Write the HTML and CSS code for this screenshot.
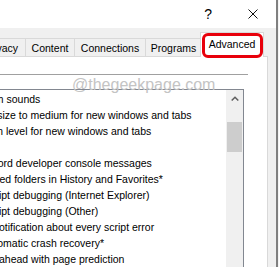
FILE: index.html
```html
<!DOCTYPE html>
<html lang="en">
<head>
    <meta charset="UTF-8">
    <meta name="viewport" content="width=device-width, initial-scale=1.0">
    <title>Internet Options - Advanced</title>
    <link rel="stylesheet" href="styles.css">
</head>
<body>

<div class="screen">
    <div class="dialog">
        <div class="titlebar">
            <span class="help">?</span>
            <svg class="close" width="10" height="10" viewBox="0 0 10 10">
                <path d="M0.5 0.5L9.5 9.5M9.5 0.5L0.5 9.5" stroke="#111" stroke-width="1" fill="none"/>
            </svg>
        </div>

        <div class="dialog-body">
            <div class="tabs">
                <div class="tab tab-cut">Privacy</div>
                <div class="tab">Content</div>
                <div class="tab">Connections</div>
                <div class="tab">Programs</div>
                <div class="tab active">Advanced</div>
            </div>

            <div class="panel">
                <div class="rule"></div>
                <div class="settings">
                    <div class="settings-list">
                        <div class="row"><span class="check"></span>Play system sounds</div>
                        <div class="row"><span class="check"></span>Reset text size to medium for new windows and tabs</div>
                        <div class="row"><span class="check"></span>Reset zoom level for new windows and tabs</div>
                        <div class="row group"><span class="group-icon"></span>Browsing</div>
                        <div class="row"><span class="check"></span>Always record developer console messages</div>
                        <div class="row"><span class="check"></span>Close unused folders in History and Favorites*</div>
                        <div class="row"><span class="check"></span>Disable script debugging (Internet Explorer)</div>
                        <div class="row"><span class="check"></span>Disable script debugging (Other)</div>
                        <div class="row"><span class="check"></span>Display a notification about every script error</div>
                        <div class="row"><span class="check"></span>Enable automatic crash recovery*</div>
                        <div class="row"><span class="check"></span>Enable flip ahead with page prediction</div>
                    </div>
                    <div class="scrollbar">
                        <div class="scroll-btn">
                            <svg width="8" height="5" viewBox="0 0 8 5">
                                <polyline points="0.7,4.5 4,1.2 7.3,4.5" stroke="#606060" stroke-width="1.5" fill="none"/>
                            </svg>
                        </div>
                        <div class="thumb"></div>
                    </div>
                </div>
                <div class="watermark">@thegeekpage.com</div>
            </div>
        </div>
    </div>
    <div class="frame-edge"></div>
</div>

</body>
</html>
```

FILE: styles.css
```css
/* Estilos básicos */
body {
    margin: 0;
    width: 279px;
    height: 267px;
    overflow: hidden;
    background: #fff;
    font-family: "Liberation Sans", Arial, sans-serif;
    color: #000;
}
.screen {
    display: flex;
    height: 267px;
}
.dialog {
    width: 276px;
    display: flex;
    flex-direction: column;
}
.frame-edge {
    width: 1px;
    border-left: 2px solid #808080;
    background: #f4f4f4;
}

/* Barra de titulo */
.titlebar {
    flex: none;
    height: 28px;
    background: #fff;
    display: flex;
    align-items: center;
    justify-content: flex-end;
    padding-right: 18px;
}
.help {
    font-size: 14px;
    line-height: 16px;
    margin-right: 36px;
}

/* Cuerpo y pestañas */
.dialog-body {
    flex: 1;
    min-height: 0;
    background: #f0f0f0;
    padding-right: 8px;
    display: flex;
    flex-direction: column;
}
.tabs {
    flex: none;
    height: 28px;
    display: grid;
    grid-template-columns: 26px 49px 71px 56px 62px;
    align-items: end;
    font-size: 10.5px;
}
.tab {
    height: 17px;
    border-top: 1px solid #d9d9d9;
    border-right: 1px solid #d9d9d9;
    display: flex;
    align-items: center;
    justify-content: center;
    white-space: nowrap;
}
.tab-cut {
    justify-content: flex-end;
    padding-right: 7px;
}
.active {
    position: relative;
    z-index: 1;
    height: 21px;
    margin-left: -2px;
    margin-bottom: -1px;
    padding-bottom: 3px;
    background: #fff;
    border-left: 1px solid #d9d9d9;
}
.active::after {
    content: "";
    position: absolute;
    left: 1px;
    top: 0;
    width: 55px;
    height: 19px;
    border: 3px solid #e8000b;
    border-radius: 6px;
}

/* Panel */
.panel {
    flex: 1;
    min-height: 0;
    position: relative;
    background: #fff;
    border-top: 1px solid #d9d9d9;
    border-right: 1px solid #d9d9d9;
    overflow: hidden;
}
.rule {
    width: 248px;
    height: 1px;
    margin-top: 17px;
    background: #a0a0a0;
}
.settings {
    width: 244px;
    margin: 14px 0 0 -2px;
    height: 200px;
    border: 1px solid #828790;
    display: flex;
}
.settings-list {
    flex: 1;
    overflow: hidden;
    padding-top: 1px;
}
.row {
    height: 16px;
    line-height: 16px;
    font-size: 10.5px;
    white-space: nowrap;
    display: flex;
    align-items: center;
    margin-left: -85px;
    padding-left: 16px;
}
.check {
    width: 11px;
    height: 11px;
    border: 1px solid #333;
    margin-right: 4px;
    flex: none;
}
.group {
    padding-left: 0;
}
.group-icon {
    width: 16px;
    height: 12px;
    margin-right: 4px;
    background: #f3d37a;
    flex: none;
}

/* Barra de desplazamiento */
.scrollbar {
    width: 17px;
    background: #f0f0f0;
}
.scroll-btn {
    height: 17px;
    display: flex;
    align-items: center;
    justify-content: center;
}
.thumb {
    width: 15px;
    height: 30px;
    margin: 15px 0 0 1px;
    background: #cdcdcd;
}

.watermark {
    position: absolute;
    left: 72px;
    top: 19px;
    font-size: 16px;
    line-height: 18px;
    color: #c4c4c4;
}
```
